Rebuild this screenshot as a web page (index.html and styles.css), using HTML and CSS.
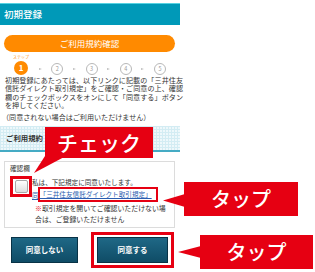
FILE: index.html
```html
<!DOCTYPE html>
<html lang="ja">
<head>
<meta charset="utf-8">
<link rel="stylesheet" href="styles.css">
</head>
<body>
<div class="page">
  <div class="screen">
    <div class="topline"></div>
    <header class="hdr">初期登録</header>
    <div class="pill">ご利用規約確認</div>
    <div class="steps">
      <div class="step-first"><span class="steplabel">ステップ</span><span class="circ on">1</span></div>
      <span class="arr"></span>
      <span class="circ">2</span>
      <span class="arr"></span>
      <span class="circ">3</span>
      <span class="arr"></span>
      <span class="circ">4</span>
      <span class="arr"></span>
      <span class="circ">5</span>
    </div>
    <p class="intro">初期登録にあたっては、以下リンクに記載の「三井住友信託ダイレクト取引規定」をご確認・ご同意の上、確認欄のチェックボックスをオンにして「同意する」ボタンを押してください。</p>
    <p class="intro note">（同意されない場合はご利用いただけません）</p>
    <div class="band">ご利用規約</div>
    <div class="card">
      <div class="cap">確認欄</div>
      <div class="row">
        <div class="cbframe"><span class="cb"></span></div>
        <div class="col">
          <div class="agree">私は、下記規定に同意いたします。</div>
          <div class="linkline"><span class="linkpre">同</span><span class="linkframe"><span class="link">「三井住友信託ダイレクト取引規定」</span></span></div>
          <div class="warn">
            <div class="wline"><span class="mark">※</span>取引規定を開いてご確認いただけない場</div>
            <div class="wline">合は、ご登録いただけません</div>
          </div>
        </div>
      </div>
    </div>
    <div class="btns">
      <div class="btn">同意しない</div>
      <div class="btnframe"><div class="btn wide">同意する</div></div>
    </div>
  </div>
  <div class="callout check">チェック</div>
  <div class="callout tap1">タップ</div>
  <div class="callout tap2">タップ</div>
</div>
</body>
</html>
```

FILE: styles.css
```css
body {
  margin: 0;
  background: #fff;
  font-family: "Noto Sans CJK JP", "Noto Sans", sans-serif;
  color: #333;
}
.page {
  position: relative;
  width: 315px;
  height: 272px;
  overflow: hidden;
}
.screen {
  width: 184px;
}
.topline {
  height: 3px;
  width: 180px;
  border-bottom: 1px solid #55d2e2;
}
.hdr {
  width: 180px;
  height: 21px;
  box-sizing: border-box;
  padding-left: 4px;
  background: #0099b8;
  color: #fff;
  font-size: 9.5px;
  line-height: 21px;
  font-weight: 500;
}
.pill {
  margin: 10px 0 0 4px;
  width: 171px;
  height: 17px;
  border-radius: 9px;
  background: #ff8a00;
  color: #fff;
  font-size: 8.5px;
  line-height: 17px;
  text-align: center;
}
.steps {
  display: flex;
  align-items: flex-end;
  justify-content: space-between;
  margin: 3px 0 0 13px;
  width: 153px;
}
.step-first {
  display: flex;
  flex-direction: column;
  align-items: center;
}
.steplabel {
  font-size: 4px;
  line-height: 5px;
  color: #ff8a00;
  margin-bottom: 1px;
  white-space: nowrap;
}
.circ {
  width: 12px;
  height: 12px;
  box-sizing: border-box;
  border: 1px solid #b8b8b8;
  border-radius: 50%;
  color: #999;
  font-size: 5.5px;
  line-height: 10px;
  text-align: center;
}
.circ.on {
  width: 14px;
  height: 14px;
  border: none;
  background: #ff8a00;
  color: #fff;
  font-size: 8px;
  font-weight: bold;
  line-height: 14px;
}
.arr {
  width: 0;
  height: 0;
  border-left: 3px solid #bdbdbd;
  border-top: 1.5px solid transparent;
  border-bottom: 1.5px solid transparent;
  margin-bottom: 5px;
}
.intro {
  margin: 1px 0 0 5px;
  width: 178px;
  font-size: 7.08px;
  line-height: 8.4px;
  text-align: justify;
  color: #333;
}
.intro.note {
  margin-top: 3.2px;
  margin-left: 2px;
  text-align: left;
}
.band {
  margin-top: 4.8px;
  width: 180px;
  height: 26px;
  box-sizing: border-box;
  padding-left: 6px;
  border-bottom: 2px solid #45abc4;
  line-height: 24px;
  font-size: 7.4px;
  font-weight: bold;
  color: #333;
  background-color: #eef8fb;
  background-image:
    linear-gradient(#d3ecf3 1px, transparent 1px),
    linear-gradient(90deg, #d3ecf3 1px, transparent 1px);
  background-size: 3px 3px;
}
.card {
  margin: 9px 0 0 4px;
  width: 171px;
  height: 67px;
  box-sizing: border-box;
  border: 1px solid #dcdcdc;
  padding: 2px 4px 2px 5px;
}
.cap {
  font-size: 6.6px;
  line-height: 9px;
}
.row {
  display: flex;
  margin-top: 3px;
}
.cbframe {
  width: 22px;
  height: 21px;
  box-sizing: border-box;
  border: 3px solid #e60012;
  display: flex;
  align-items: center;
  justify-content: center;
  flex: none;
}
.cb {
  width: 13px;
  height: 13px;
  box-sizing: border-box;
  border: 1px solid #a8a8a8;
  border-radius: 2px;
  background: linear-gradient(#ffffff, #dedede);
}
.col {
  margin-top: 1.5px;
  font-size: 6.6px;
  line-height: 9px;
  min-width: 0;
}
.agree {
  white-space: nowrap;
}
.linkline {
  white-space: nowrap;
  height: 15px;
  display: flex;
  align-items: center;
}
.linkpre {
  color: #2a5db0;
  text-decoration: underline;
  line-height: 10px;
  padding-top: 2px;
}
.linkframe {
  display: block;
  margin-left: -1px;
  height: 15px;
  box-sizing: border-box;
  border: 2.5px solid #e60012;
  padding: 0 4px 0 0;
  line-height: 10px;
}
.link {
  color: #2a5db0;
  text-decoration: underline;
}
.warn {
  margin-top: 1px;
  padding-left: 3px;
  font-size: 6.9px;
  line-height: 11.5px;
}
.wline {
  white-space: nowrap;
}
.mark {
  color: #e60012;
}
.btns {
  display: flex;
  align-items: center;
  margin-top: 4px;
  padding-left: 11px;
}
.btn {
  width: 67px;
  height: 26px;
  box-sizing: border-box;
  border: 1px solid #083246;
  background: linear-gradient(#1f6886, #0f4c66);
  color: #fff;
  font-size: 7.5px;
  font-weight: bold;
  line-height: 24px;
  text-align: center;
}
.btn.wide {
  width: 71px;
}
.btnframe {
  margin-left: 13px;
  border: 3px solid #e60012;
  padding: 2px 3px;
}
.callout {
  position: absolute;
  background: #e60012;
  color: #fff;
  text-align: center;
  font-weight: 500;
}
.callout::after {
  content: "";
  position: absolute;
  background: #e60012;
}
.check {
  left: 45px;
  top: 127px;
  width: 108px;
  height: 31px;
  font-size: 21px;
  line-height: 31px;
}
.check::after {
  left: -11px;
  top: 29px;
  width: 32px;
  height: 17px;
  clip-path: polygon(11px 0, 32px 0, 0 17px);
}
.tap1 {
  left: 184px;
  top: 182px;
  width: 114px;
  height: 34px;
  font-size: 20px;
  line-height: 34px;
}
.tap1::after {
  left: -21px;
  top: 12px;
  width: 22px;
  height: 13px;
  clip-path: polygon(100% 0, 100% 100%, 0 50%);
}
.tap2 {
  left: 200px;
  top: 235px;
  width: 113px;
  height: 34px;
  font-size: 20px;
  line-height: 34px;
}
.tap2::after {
  left: -22px;
  top: 11px;
  width: 23px;
  height: 12px;
  clip-path: polygon(100% 0, 100% 100%, 0 50%);
}
```
